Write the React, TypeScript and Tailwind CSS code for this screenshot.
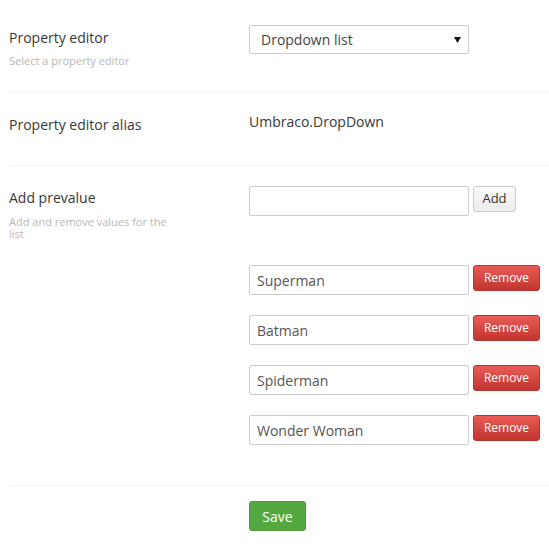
const prevalues = ["Superman", "Batman", "Spiderman", "Wonder Woman"];

function Label({ title, description }: { title: string; description?: string }) {
  return (
    <div className="w-[240px] shrink-0 pt-[3px]">
      <div className="text-[14px] leading-[20px] text-[#383838]">{title}</div>
      {description && (
        <div className="mt-[7px] w-[166px] text-[11px] leading-[12px] text-[#b8b8b8]">
          {description}
        </div>
      )}
    </div>
  );
}

function TextInput({ value }: { value: string }) {
  return (
    <div className="flex h-[30px] w-[220px] items-center rounded-[2px] border border-[#cccccc] bg-white pl-[7px] text-[14px] text-[#555555]">
      {value}
    </div>
  );
}

export default function App() {
  return (
    <div className="min-h-[547px] w-[549px] bg-white pl-[9px] font-['Open_Sans',sans-serif]">
      {/* Property editor */}
      <div className="flex h-[92px] border-b border-[#f3f3f3] pt-[25px]">
        <Label title="Property editor" description="Select a property editor" />
        <div className="flex h-[29px] w-[220px] items-center justify-between rounded-[2px] border border-[#cccccc] bg-white pl-[11px] pr-[7px] text-[14px] text-[#444444]">
          <span>Dropdown list</span>
          <svg width="7" height="6" viewBox="0 0 7 6">
            <path d="M0 0 L7 0 L3.5 6 Z" fill="#111" />
          </svg>
        </div>
      </div>

      {/* Alias */}
      <div className="flex h-[74px] border-b border-[#f3f3f3] pt-[20px]">
        <Label title="Property editor alias" />
        <div className="text-[14px] leading-[20px] text-[#383838]">Umbraco.DropDown</div>
      </div>

      {/* Prevalues */}
      <div className="flex border-b border-[#f3f3f3] pb-[40px] pt-[20px]">
        <div className="w-[240px] shrink-0 pt-[2px]">
          <div className="text-[14px] leading-[20px] text-[#383838]">Add prevalue</div>
          <div className="mt-[8px] w-[166px] text-[11px] leading-[12px] text-[#b8b8b8]">
            Add and remove values for the list
          </div>
        </div>
        <div className="flex flex-col">
          <div className="flex items-start gap-[4px]">
            <TextInput value="" />
            <button className="h-[26px] w-[43px] rounded-[3px] border border-[#cccccc] bg-gradient-to-b from-[#fafafa] to-[#ececec] text-[13px] text-[#333333]">
              Add
            </button>
          </div>
          <div className="mt-[49px] flex flex-col gap-[20px]">
            {prevalues.map((v) => (
              <div key={v} className="flex items-start gap-[4px]">
                <TextInput value={v} />
                <button className="h-[26px] w-[67px] rounded-[3px] border border-[#b7332d] bg-gradient-to-b from-[#ea5b57] to-[#c0352f] text-[12px] text-white">
                  Remove
                </button>
              </div>
            ))}
          </div>
        </div>
      </div>

      {/* Save */}
      <div className="flex pt-[15px]">
        <div className="w-[240px] shrink-0" />
        <button className="h-[30px] w-[57px] rounded-[3px] border border-[#4a9a38] bg-[#53a93f] text-[14px] text-white">
          Save
        </button>
      </div>
    </div>
  );
}
